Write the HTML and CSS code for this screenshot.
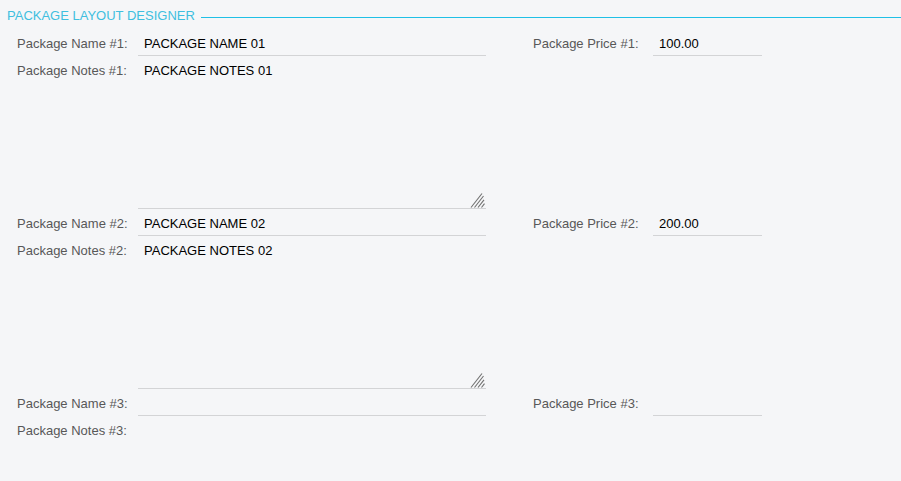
FILE: index.html
```html
<!DOCTYPE html>
<html lang="en">
<head>
<meta charset="utf-8">
<title>Package Layout Designer</title>
<link rel="stylesheet" href="styles.css">
</head>
<body>
<div class="panel">
  <div class="legend">
    <span class="legend-title">PACKAGE LAYOUT DESIGNER</span>
    <span class="legend-line"></span>
  </div>
  <div class="form">
    <label class="lbl">Package Name #1:</label>
    <div class="field name">PACKAGE NAME 01</div>
    <span class="spacer"></span>
    <label class="lbl">Package Price #1:</label>
    <div class="field price">100.00</div>

    <label class="lbl notes-lbl">Package Notes #1:</label>
    <div class="field notes">PACKAGE NOTES 01<span class="grip"><svg width="16" height="16" viewBox="0 0 16 16"><g stroke="#6f6f6f" stroke-width="1.1" fill="none"><line x1="1" y1="15.5" x2="12" y2="1.5"/><line x1="4.5" y1="15.5" x2="13.5" y2="4"/><line x1="8" y1="15.5" x2="14" y2="7.8"/><line x1="11.5" y1="15.5" x2="14.5" y2="11.7"/></g></svg></span></div>
    <span class="rest"></span>

    <label class="lbl">Package Name #2:</label>
    <div class="field name">PACKAGE NAME 02</div>
    <span class="spacer"></span>
    <label class="lbl">Package Price #2:</label>
    <div class="field price">200.00</div>

    <label class="lbl notes-lbl">Package Notes #2:</label>
    <div class="field notes">PACKAGE NOTES 02<span class="grip"><svg width="16" height="16" viewBox="0 0 16 16"><g stroke="#6f6f6f" stroke-width="1.1" fill="none"><line x1="1" y1="15.5" x2="12" y2="1.5"/><line x1="4.5" y1="15.5" x2="13.5" y2="4"/><line x1="8" y1="15.5" x2="14" y2="7.8"/><line x1="11.5" y1="15.5" x2="14.5" y2="11.7"/></g></svg></span></div>
    <span class="rest"></span>

    <label class="lbl">Package Name #3:</label>
    <div class="field name"></div>
    <span class="spacer"></span>
    <label class="lbl">Package Price #3:</label>
    <div class="field price"></div>

    <label class="lbl notes-lbl">Package Notes #3:</label>
    <div class="field notes empty"></div>
    <span class="rest"></span>
  </div>
</div>
</body>
</html>
```

FILE: styles.css
```css
html, body {
  margin: 0;
  padding: 0;
  background: #f5f6f8;
  overflow: hidden;
}

body {
  font-family: "Liberation Sans", Arial, sans-serif;
  font-size: 13px;
  line-height: 15px;
}

.panel {
  width: 901px;
}

.legend {
  display: flex;
  align-items: flex-start;
  height: 29px;
  box-sizing: border-box;
  padding: 8px 0 0 7px;
}

.legend-title {
  color: #3fbfdf;
  white-space: nowrap;
}

.legend-line {
  flex: 1;
  height: 0;
  margin-top: 9px;
  margin-left: 6px;
  border-top: 1px solid #1fc0e6;
}

.form {
  display: grid;
  grid-template-columns: 121px 348px 47px 120px 109px;
  padding-left: 17px;
}

.lbl {
  color: #585858;
  padding-top: 7px;
  white-space: nowrap;
}

.notes-lbl {
  padding-top: 7px;
}

.field {
  color: #000;
  box-sizing: border-box;
  border-bottom: 1px solid #d3d4d6;
  white-space: nowrap;
}

.name, .price {
  height: 27px;
  padding: 7px 6px 0;
}

.notes {
  position: relative;
  height: 153px;
  padding: 7px 6px 0;
}

.notes.empty {
  height: 65px;
  border-bottom-color: transparent;
}

.grip {
  position: absolute;
  right: 0;
  bottom: 0;
  width: 16px;
  height: 16px;
  display: block;
}

.grip svg {
  display: block;
}

.rest {
  grid-column: span 3;
}
```
